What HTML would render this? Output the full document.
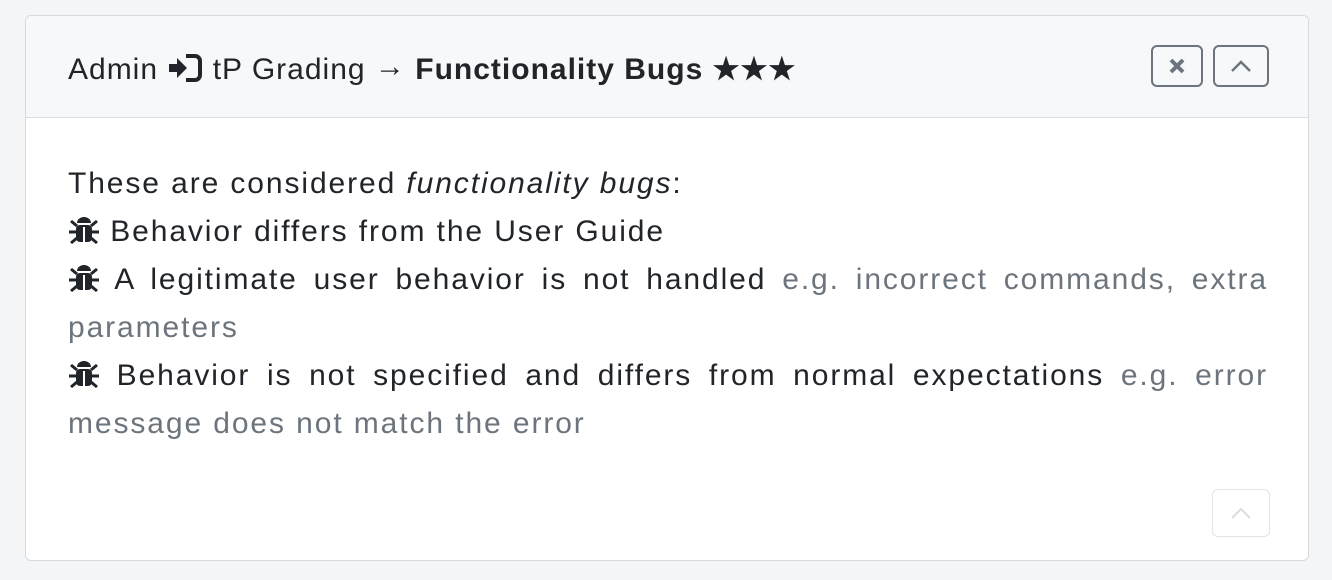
<!DOCTYPE html>
<html><head><meta charset="utf-8"><style>
html,body{margin:0;padding:0;background:#f4f5f7;width:1332px;height:580px;overflow:hidden;font-family:"Liberation Sans",sans-serif;color:#212529}
.card{position:absolute;left:25px;top:15px;width:1282px;height:544px;border:1px solid #d8dadd;border-radius:6px;background:#fff;overflow:hidden}
.hdr{height:101px;background:#f7f8fa;border-bottom:1px solid #dcdee1;position:relative}
.title{position:absolute;left:42px;top:34px;font-size:30px;line-height:40px;white-space:nowrap;letter-spacing:1px}
.btn{position:absolute;top:29px;width:52px;height:42px;border:2px solid #6c757d;border-radius:6px;box-sizing:border-box;display:flex;align-items:center;justify-content:center}
.body{position:absolute;left:42px;top:144px;width:1200px;font-size:30px;line-height:48px;text-align:justify;letter-spacing:1.9px}
.g{color:#6c757d}
.bug{display:inline-block;width:32px;height:30px;vertical-align:-4px}
.b2{position:absolute;left:1186px;top:473px;width:56px;height:46px;border:1px solid #e2e4e7;border-radius:6px;display:flex;align-items:center;justify-content:center}
</style></head><body>
<div class="card">
<div class="hdr">
<div class="title">Admin <svg width="36" height="30" viewBox="0 0 36 30" style="vertical-align:-4px"><path d="M2 11h8V5l10 10-10 10v-6H2z" fill="#212529"/><path d="M19 3h9a5 5 0 0 1 5 5v14a5 5 0 0 1-5 5h-9" fill="none" stroke="#212529" stroke-width="4"/></svg> tP Grading <span style="position:relative;top:-3px">→</span> <b>Functionality Bugs ★★★</b></div>
<div class="btn" style="left:1125px"><svg width="18" height="18" viewBox="0 0 18 18"><path d="M3 3l12 12M15 3L3 15" stroke="#6c757d" stroke-width="4"/></svg></div>
<div class="btn" style="left:1187px;width:56px"><svg width="22" height="14" viewBox="0 0 22 14"><path d="M2 12L11 3l9 9" fill="none" stroke="#6c757d" stroke-width="2.5"/></svg></div>
</div>
<div class="body">
<div>These are considered <i>functionality bugs</i>:</div>
<div><svg class="bug" viewBox="0 0 32 30"><g fill="#212529"><path d="M9 8a7 6 0 0 1 14 0z"/><rect x="8" y="10" width="16" height="17" rx="4"/><path d="M3 6l6 5M29 6l-6 5M1 17h8M31 17h-8M3 28l6-5M29 28l-6-5" stroke="#212529" stroke-width="3"/></g><rect x="15" y="12" width="2" height="15" fill="#fff"/></svg> Behavior differs from the User Guide</div>
<div><svg class="bug" viewBox="0 0 32 30"><g fill="#212529"><path d="M9 8a7 6 0 0 1 14 0z"/><rect x="8" y="10" width="16" height="17" rx="4"/><path d="M3 6l6 5M29 6l-6 5M1 17h8M31 17h-8M3 28l6-5M29 28l-6-5" stroke="#212529" stroke-width="3"/></g><rect x="15" y="12" width="2" height="15" fill="#fff"/></svg> A legitimate user behavior is not handled <span class="g">e.g. incorrect commands, extra parameters</span></div>
<div><svg class="bug" viewBox="0 0 32 30"><g fill="#212529"><path d="M9 8a7 6 0 0 1 14 0z"/><rect x="8" y="10" width="16" height="17" rx="4"/><path d="M3 6l6 5M29 6l-6 5M1 17h8M31 17h-8M3 28l6-5M29 28l-6-5" stroke="#212529" stroke-width="3"/></g><rect x="15" y="12" width="2" height="15" fill="#fff"/></svg> Behavior is not specified and differs from normal expectations <span class="g">e.g. error message does not match the error</span></div>
</div>
<div class="b2"><svg width="22" height="14" viewBox="0 0 22 14"><path d="M2 12L11 3l9 9" fill="none" stroke="#dadcdf" stroke-width="2"/></svg></div>
</div>
</body></html>
